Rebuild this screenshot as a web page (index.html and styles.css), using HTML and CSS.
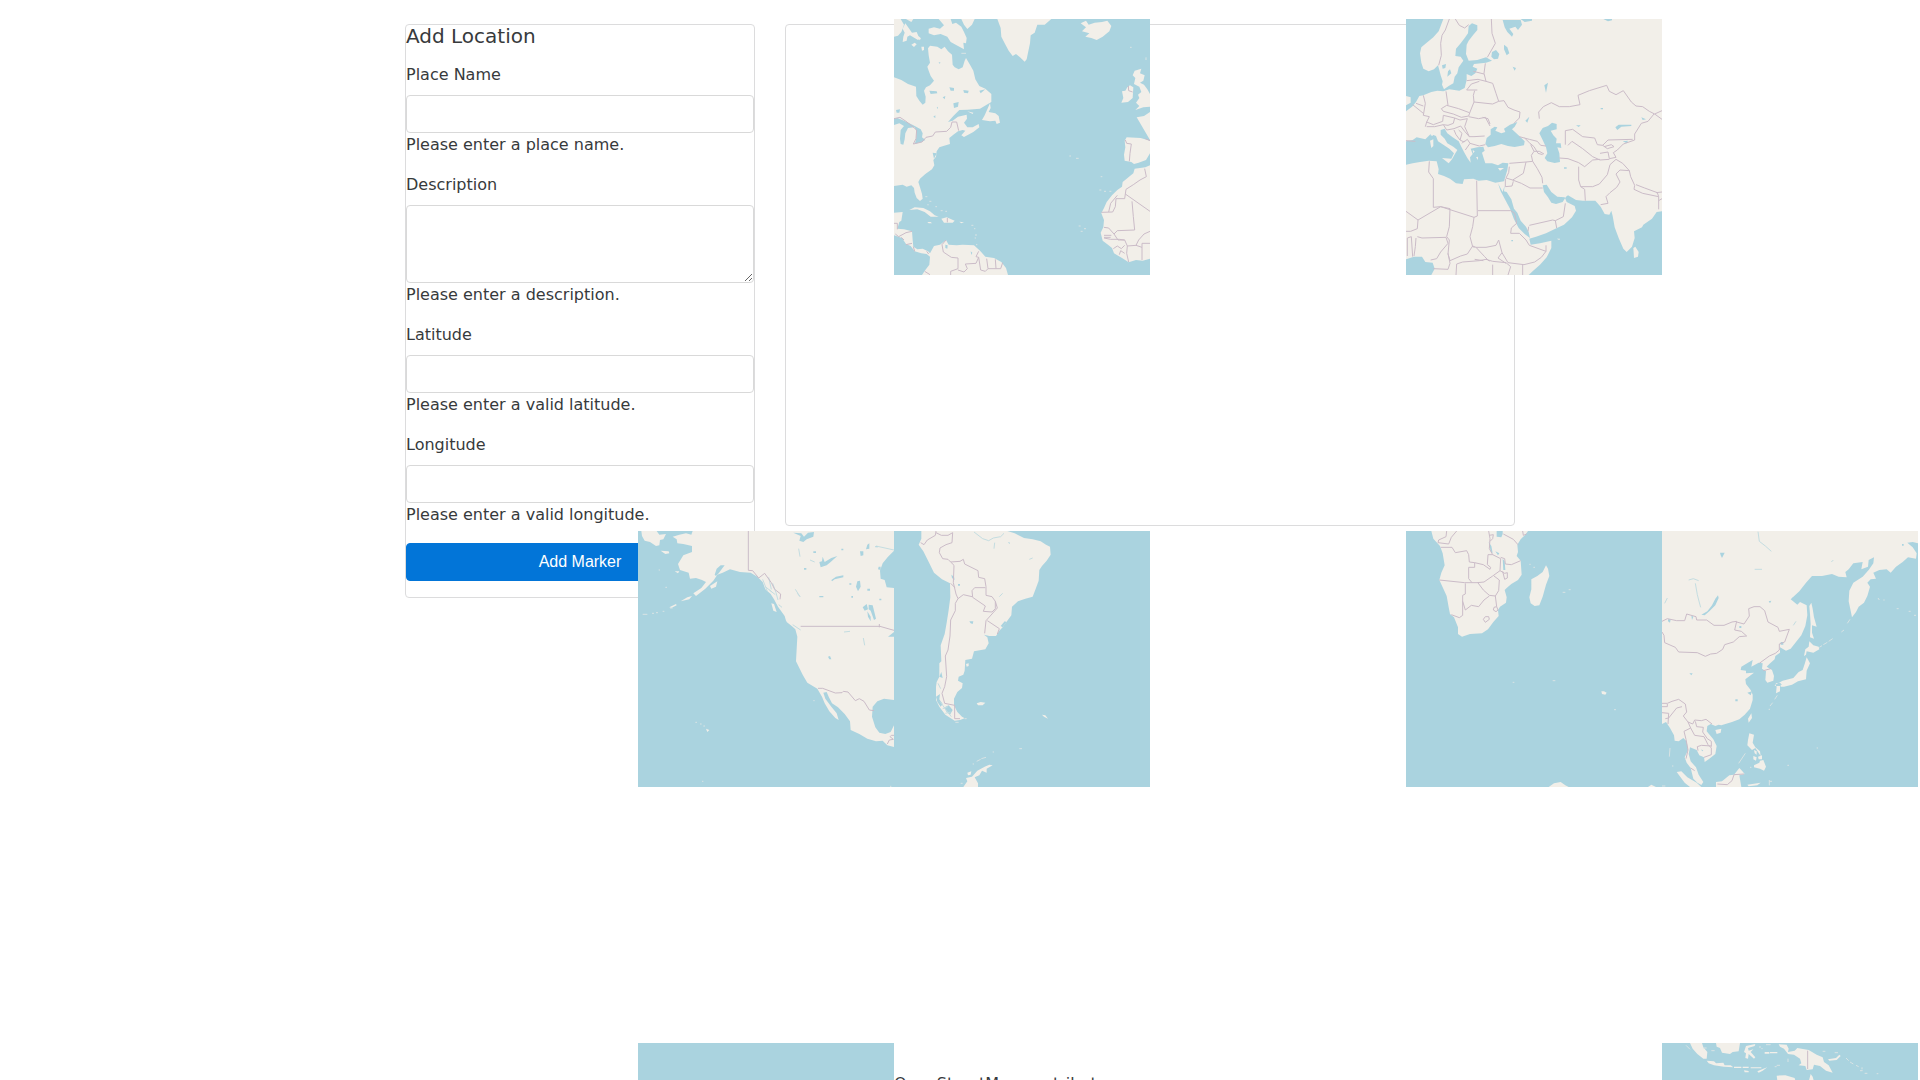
FILE: index.html
```
<!DOCTYPE html>
<html lang="en">
<head>
    <meta charset="UTF-8">
    <meta name="viewport" content="width=device-width, initial-scale=1.0">
    <title>Add Location</title>
    <link rel="stylesheet" href="styles.css">
</head>
<body>
    <div class="page">
    <div class="container">
        <div class="form-column">
            <form class="card" novalidate>
                <h4 class="card-title">Add Location</h4>

                <div class="form-group">
                    <label for="placeName">Place Name</label>
                    <input type="text" class="form-control" id="placeName" required>
                    <div class="feedback">Please enter a place name.</div>
                </div>
                <div class="form-group">
                    <label for="description">Description</label>
                    <textarea class="form-control" id="description" rows="3" required></textarea>
                    <div class="feedback">Please enter a description.</div>
                </div>
                <div class="form-group">
                    <label for="latitude">Latitude</label>
                    <input type="text" class="form-control" id="latitude" required>
                    <div class="feedback">Please enter a valid latitude.</div>
                </div>
                <div class="form-group">
                    <label for="longitude">Longitude</label>
                    <input type="text" class="form-control" id="longitude" required>
                    <div class="feedback">Please enter a valid longitude.</div>
                </div>

                <button type="button" class="btn">Add Marker</button>
            </form>
        </div>

        <div class="map-column">
            <div class="card map" id="map">
                <div class="tiles">
                    <!-- North Atlantic -->
                    <svg class="tile north-atlantic" viewBox="30 27 768 768">
                        <path class="land" d="M30 27H50L60 44L52 66L42 77L30 80ZM64 40L74 54L84 68L98 66L103 78L110 84L102 90L88 82L78 76L70 80L68 92L56 96L58 80L62 68L56 56ZM66 27H88L82 36ZM104 80L111 86L106 91ZM82 104L92 98L98 103L90 111ZM164 27H200L205 42L216 38L232 50L240 66L248 84L246 100L238 98L240 118L222 108L200 96L190 80L170 72L150 76L134 70L134 56L150 52L168 56L180 46ZM232 27H272L264 44L250 57L240 44ZM112 110L120 110L120 120L114 122ZM132 115L138 107L160 110L172 118L182 110L192 124L204 134L206 164L212 172L224 178L236 172L242 152L246 144L258 164L268 182L274 208L286 228L304 236L322 252L322 276L308 284L288 296L250 299L226 300L208 318L192 336L206 332L222 320L248 314L249 326L240 338L250 352L266 352L284 342L286 352L268 366L240 381L232 376L244 362L236 360L222 364L208 374L196 384L198 402L178 408L166 412L158 424L156 440L148 450L151 466L144 478L124 492L108 506L103 516L108 532L114 552L116 566L108 573L98 564L92 548L90 534L82 526L68 530L56 524L30 528V345L46 340L60 348L50 360L48 386L50 402L58 404L62 388L64 370L72 354L92 352L98 366L96 390L92 402L112 396L124 390L114 382L116 370L110 358L88 346L60 332L40 324L30 326V202L52 210L72 222L96 230L97 258L106 272L116 284L124 278L125 260L120 242L126 232L138 226L150 212L140 198L134 182L130 170L138 158L134 136ZM318 280L320 294L314 306L334 310L344 318L348 338L338 342L334 332L318 334L294 330L302 316ZM250 304L268 308L266 312ZM340 27H502L482 44L460 44L452 68L440 76L438 100L432 128L428 148L422 155L408 142L396 132L386 138L374 122L362 100L352 80L350 54ZM590 40L606 32L614 44L632 38L654 36L670 32L682 48L676 64L656 80L638 90L622 84L604 80L616 70L594 64L606 52ZM752 182L772 176L768 190L782 196L778 212L768 218L780 224L790 238L798 252V290L778 292L754 300L766 288L756 278L766 264L762 254L772 246L766 230L750 222L754 204L746 196ZM730 232L738 226L748 232L746 264L732 276L712 278L718 264L714 244L724 242ZM758 322L780 318L798 306V392L770 384L728 382L722 392L724 412L720 434L722 452L742 456L750 462L764 458L786 450L798 430V466L784 472L752 476L748 490L716 516L714 530L700 540L684 556L668 576L660 594L652 610L660 630L658 652L650 668L656 692L672 704L684 714L690 730L714 744L734 757L756 750L776 752L798 746V390ZM30 608L56 606L52 632L46 636L40 656L60 658L84 664L86 690L88 710L100 718L116 716L132 724L138 730L150 708L168 704L186 690L194 704L218 706L236 704L270 706L288 722L304 740L330 744L352 756L366 774L372 795H114L124 780L136 764L138 740L128 732L112 730L92 724L80 708L66 702L54 684L30 676ZM76 600L92 592L118 594L138 604L152 616L164 620L140 620L122 606L100 598ZM172 626L188 622L212 632L206 638L180 638L176 632ZM130 636L140 636L144 640L134 640ZM226 635L240 637L232 640Z"/>
                        <path class="water" d="M136 242L158 244L160 250L140 252ZM196 232L210 234L210 242L200 242ZM238 240L254 242L252 250L240 248ZM286 242L304 238L290 250ZM176 262L184 258L182 268ZM208 280L224 276L222 290L210 294ZM158 294L162 290L162 296ZM148 320L154 316L154 324ZM118 206L128 210L120 218L114 214ZM36 300L48 298L46 308L38 308ZM260 724L265 728L262 735ZM184 704L191 706L190 716L184 714ZM164 156L170 158L166 161ZM146 428L158 430L150 446Z"/>
                        <path class="border" d="M30 326L48 322L66 334L84 348L98 360L96 386L88 402L114 396L126 382L146 378L154 366L188 364L200 352L204 336L218 336L224 362M733 228L734 242L746 246M724 390L728 400L742 402L738 430L736 454M784 386L798 392M782 476L787 500L768 510L748 524L726 538L724 552L798 604M724 552L722 566L696 566L694 590L686 606L652 607M700 556L680 580L674 606M744 574L748 620L752 660L700 662L690 672L674 654L660 652M660 676H682M660 682H680M690 672L702 690H722L730 708L756 706L764 690L780 672L798 664M774 750V700H798M756 706L774 712M730 708L728 730L734 756M722 690L706 688L680 688L660 684M706 734L710 722L722 730M688 716L700 708L712 716L722 706M30 640H40V658M34 672L44 680L66 668L84 664M52 682L60 690M66 704L84 700M88 710L92 724M134 732L128 724M186 690L174 704L178 726L202 742L222 744L222 776L200 784V795M222 780L240 786L250 776L244 762L276 760L284 742L276 740L284 724M284 742L290 780L304 784L312 776L308 746M312 776L336 776L334 748M336 776L350 776L356 758M122 784L138 794M190 624V637"/>
                        <path class="islet" d="M124 560h6M136 574h6M132 582v4M154 590h5M170 602h6M184 604h5M262 646h6M270 656h4M276 672v6M272 684h4M276 704h4M556 438h5M576 445h8M646 540h6M660 544h6M676 544h6M650 500h5M584 648h6M600 656h6M590 664h6M738 112h5M786 142v8M232 130h14"/>
                    </svg>

                    <!-- Europe, Middle East, India -->
                    <svg class="tile eurasia" viewBox="30 27 768 768">
                        <rect class="land" x="30" y="27" width="768" height="768"/>
                        <path class="water" d="M30 27H142L134 48L128 64L112 82L92 98L76 112L72 130L76 158L82 176L98 184L114 178L126 166L130 180L134 196L140 214L138 224L144 238L158 228L172 220L176 200L184 190L188 172L202 152L194 140L178 138L180 116L194 100L206 84L216 70L218 48L228 40L244 46L244 60L232 74L218 92L212 104L210 132L218 152L244 150L270 142L288 152L270 158L234 162L230 170L244 176L238 190L226 198L212 192L212 210L206 234L190 242L160 238L142 244L124 242L106 246L82 256L70 258L60 276L48 290L30 304V286L44 278L44 262L30 258ZM100 238L104 222L100 206L106 192L120 194L118 212L130 220L124 234L118 240ZM288 126L300 120L310 132L306 146L294 148L286 140ZM320 30H374L378 44L366 60L358 50L340 56L352 72L348 80L334 66L326 52ZM374 27H408V32L386 36ZM622 27H648V31L636 34ZM324 104L334 112L340 130L332 136L324 118ZM350 170L360 174L356 182ZM138 166L150 162L148 174L140 176ZM156 184L162 178L166 190L154 200ZM30 394L50 390L62 382L88 388L104 372L120 378L126 394L142 404L160 416L174 430L166 446L138 444L158 460L168 448L178 430L184 420L172 410L154 400L146 386L134 374L134 360L146 356L154 370L170 382L188 394L196 410L204 426L214 444L224 458L222 442L230 432L224 416L244 412L262 410L266 422L258 428L264 448L268 460L288 460L306 466L320 458L337 460L334 480L324 514L298 518L272 510L248 512L232 506L204 508L200 522L180 520L162 506L144 498L126 492L128 478L122 454L98 452L72 456L50 460L30 464ZM268 402L272 384L284 374L284 358L296 350L304 352L298 362L316 370L328 366L324 356L342 344L364 336L356 350L348 358L370 378L386 394L384 406L356 411L336 408L316 402L296 408L276 412ZM430 370L440 354L456 348L468 338L482 342L482 358L464 362L472 376L482 386L480 400L494 400L496 414L484 412L490 430L492 456L476 459L454 454L446 444L454 430L450 412L440 390ZM306 520L314 544L330 574L342 596L354 628L368 654L386 672L402 684L398 666L390 650L374 632L364 608L354 596L346 568L332 546L324 544L326 526L320 546ZM400 686L404 704L432 700L466 692L466 714L452 742L432 764L414 780L398 795H798V604L782 606L768 626L742 644L738 652L714 664L716 684L708 710L692 726L682 716L668 684L656 652L650 618L646 602L640 614L626 612L614 590L598 572L560 572L540 570L516 556L510 560L500 576L480 582L466 578L456 562L444 546L440 526L452 524L466 546L484 560L506 562L512 576L536 588L540 602L528 622L504 644L478 656L450 670L420 680ZM30 748L54 740L78 740L88 756L110 758L116 776L106 795H30ZM658 352L668 344L706 344L706 348L676 350L664 360ZM504 472H512V476H504ZM614 294H621V298H614ZM736 322L750 328L740 330ZM680 394L696 392L692 400ZM540 346L554 346L548 351ZM445 226L456 218L450 248ZM388 332L400 320L394 338ZM346 690h5v4h-5Z"/>
                        <path class="land" d="M104 362L112 370L110 378L104 376ZM102 392L112 388L112 408L106 414L104 404ZM306 474L324 474L312 482ZM712 714L718 710L728 726L726 740L714 744ZM482 686L492 686L490 690ZM238 226L244 220L246 230ZM230 420L236 424L232 430ZM240 442L246 440L246 450Z"/>
                        <path class="border" d="M160 27L148 60L138 76L134 100L136 136L128 166M178 27L190 46L206 54L218 44M286 27L288 70L298 100L274 142M268 160L264 190L270 214L246 208L212 212M232 184L264 192M244 240L212 240L226 222L250 214M270 214L290 220L300 250L308 274L290 282L234 276L232 256L236 242M308 274L324 272L336 292L354 300L372 306L370 324L354 340M234 276L222 306L218 318L196 322L172 312L142 304L136 296L152 286L188 296L220 308M150 244L156 286M82 256L88 280L82 316L100 320L92 336L88 350M50 284L82 310M60 280L82 288M92 336L112 344L140 334L142 316L176 324L172 340L156 346L142 344L116 350L92 350M142 344L152 360L174 356L194 348L206 364L220 380L234 380L266 378M176 324L192 330L214 326L206 350L220 380M218 320L248 326L268 322L282 348M260 322L276 326L282 342M174 360L180 374L192 390L198 370L188 360M192 390L204 396L214 388L222 400L208 420M198 400L206 392M222 400L250 408L268 404M30 392L58 394M370 380L400 388L424 394L434 406L450 408M386 384L400 398L414 410L426 430L440 434M404 404L414 424L406 436L410 454L390 456L340 460M414 424L430 424L444 432M390 456L382 490L350 510L330 504L338 488L340 470M410 454L424 476L438 502L440 520M350 510L376 520L402 534L440 534M328 506L328 530L348 528L352 514M430 326L428 306L442 290L466 278L490 290L520 290L552 284L546 256L580 242L632 226L640 244L660 254L682 242L706 276L720 288L740 290L760 304L776 312L798 302M776 312L798 328M774 312L756 334L736 340L716 372L716 390L682 402L664 420L652 428L660 442L640 446L636 426L612 430M508 404V362L530 358L560 380L596 384L604 404L620 406L636 390L710 388M516 406L528 394L560 416L590 440L612 450L640 448M620 406L634 416L654 410L646 404L624 410M490 444L516 446L548 458L566 470L590 450L612 448M548 470V510L554 530L566 538L568 572M554 530L590 530L610 522L634 494L642 464L660 448L680 460L700 482L704 500L716 526L714 538L740 550L788 560L784 548L746 534L720 524M700 482L672 480L660 492L672 516L662 532L642 548L630 560L636 580L614 584M780 548L798 546M788 560V598M798 566L788 572M100 454L98 486L112 506V592L134 590L234 622M242 512L244 618L234 622L230 650L222 680L230 710L236 712M246 602H344M344 602L356 610L362 640L346 654L344 670L370 670L390 690L400 706L450 724L436 742L416 756L384 764L336 758L318 728L308 690L300 706L270 712L240 712L230 708L214 732L194 738L162 752L156 732L160 690L152 680L160 650L162 596L134 590L66 630L30 604M66 630L64 656L44 664L30 664M64 680L78 684L150 682L156 700L134 726L122 746L104 750M60 684L58 710L54 738M34 738V684L46 680L50 740M156 730L162 760L156 778L112 776M180 795L182 762L200 756L250 752L270 748L290 754L330 758L344 770L336 795M240 712L266 740L280 754M318 728L306 744L330 760M400 646L470 630L478 632L502 620L508 580M398 650L396 664M478 632L482 654M380 764V795M450 706V724M290 764V795M262 752L236 748"/>
                    </svg>

                    <!-- North Pacific -->
                    <svg class="tile north-pacific" viewBox="24 33 768 768">
                        <path class="land" d="M34 33H80L88 44L108 42L100 58L90 60L88 76L78 78L60 66L44 62L36 48ZM128 50L148 44L168 40L184 44L188 33H792V92L774 110L758 130L750 152L752 176L764 180L770 202L792 204V336L774 350L792 350V540L762 536L742 544L728 560L726 590L736 622L748 638L766 642L782 636L792 616V681L772 676L758 662L738 664L712 656L688 642L662 630L660 604L644 582L624 562L606 550L596 530L590 516L580 518L586 536L604 560L620 580L626 600L616 594L598 574L584 550L576 530L562 506L532 488L518 464L498 424L502 350L496 328L468 302L464 288L444 260L432 238L422 222L406 208L398 186L382 170L362 158L330 156L300 148L278 158L262 164L250 182L226 206L198 228L190 220L214 204L228 186L216 180L198 174L180 176L176 158L150 150L144 132L160 106L186 96L186 78L160 72L142 70L140 58ZM92 92L116 94L118 100L106 102ZM134 154L148 154L144 160ZM262 184L258 200L244 206L240 198ZM152 244L172 232L186 228L178 238ZM118 262L138 252L140 256L124 264ZM424 250L432 252L440 276L430 272ZM466 294L482 302L508 326L500 330L470 306ZM228 626L238 630L232 636Z"/>
                        <path class="water" d="M254 164L260 146L272 136L284 136L276 146L266 160L258 168ZM490 38L514 40L522 50L534 38L552 36L550 50L530 58L520 66L508 62L512 48ZM568 126L576 124L578 110L584 126L604 114L622 108L602 126L590 136L572 142ZM690 94H700V106L692 108ZM712 74L718 70L718 86L708 88ZM618 170L640 166L640 172L614 178L606 184L604 180ZM682 184L690 182L692 200L684 214L678 200ZM698 262L710 252L714 268L704 272ZM716 254L728 256L738 296L732 300L722 272L716 268ZM712 274L722 290L722 304L714 290ZM746 140L752 140L752 150L744 148ZM594 410L600 408L604 418L598 418ZM568 228h12v4h-12ZM550 94h8v5h-8ZM522 144h7v5h-7ZM634 86h6v5h-6ZM658 190h6v4h-6ZM712 206h8v6h-8ZM664 228h5v5h-5ZM748 236h6v5h-6ZM736 78h8v4h-8Z"/>
                        <path class="river" d="M398 178L412 214M416 172L424 208M428 190L438 218L444 240M406 200L426 216M418 210L436 224M506 86L510 110M496 208L510 230L502 220M540 120L554 126M446 254L456 262M700 354L704 376M642 336L660 334M738 78L792 90M488 314L512 330"/>
                        <path class="border" d="M355 33V151L368 152L386 174L404 160L424 188L434 208L452 222L450 238M512 319H750L774 326L792 331M748 312v10M564 505H578L616 519L636 518L640 514L654 516L676 542L688 536L702 544L718 570L732 572M772 672L778 660L790 658L780 650L784 646L792 646"/>
                        <path class="islet" d="M38 283h14M66 280h6M78 278h6M98 274h5M120 264h8M196 607h5M210 612h5M220 618h5M86 150h4M106 202h5M550 542h4M216 784h4M780 799h4"/>
                    </svg>

                    <!-- South America -->
                    <svg class="tile south-america" viewBox="24 33 768 768">
                        <path class="land" d="M106 33H364L386 40L414 54L440 58L464 64L480 74L492 80L494 104L482 122L468 138L460 150L458 182L450 204L440 230L418 236L396 244L378 260L376 286L364 302L350 322L340 332L330 348L310 348L294 344L304 352L308 370L298 388L264 394L258 416L238 420L236 452L232 464L218 470L216 482L230 490L228 504L214 516L204 536L204 556L214 576L228 590L236 595L222 600L206 602L178 584L160 560L150 540L150 500L152 486L160 470L160 430L166 424L164 376L176 342L182 308L188 270L193 232L192 190L168 178L144 158L130 130L112 94L98 74L106 56ZM232 801L244 784L240 774L258 770L274 752L296 740L310 734L320 736L302 746L302 758L288 752L280 766L266 772L276 790V801ZM244 758L256 754L254 764L246 766ZM272 550L284 546L298 548L290 556L276 556ZM468 584L478 586L486 596L474 590ZM240 432L248 430L248 438L242 440Z"/>
                        <path class="water" d="M196 164L204 170L206 180L198 174ZM250 304L262 304L260 312L254 310ZM344 318L356 304L362 306L350 322ZM366 66L372 68L370 72ZM216 192h6v5h-6ZM150 530L162 522L160 538L170 552L164 560L154 546ZM160 470L166 456L170 474ZM176 562L188 556L200 570L192 584L180 574Z"/>
                        <path class="river" d="M264 36L290 56L308 62L322 54L344 50L354 40M430 118L440 114M340 230L350 220M324 86L326 68M156 490L164 506M162 544L180 570L196 590M170 566L186 560M178 580L194 576"/>
                        <path class="border" d="M104 68L114 74L124 60L148 46L150 33M150 38L166 46L186 46L200 38L198 68L180 74L162 84L160 98L170 116L186 118L194 126L222 124L232 118L236 132L276 152L278 172L296 176L300 200V226L318 230L328 244L328 266L318 276L292 274L298 258L260 232L258 212L266 203L298 203M194 126L204 136L202 188L210 222L216 236L232 224L258 230M194 190L206 202M216 236L208 250V272L194 300L192 348L186 390L178 408L182 470L176 500L168 520L176 550L206 556V596H222M328 244L334 264L300 302L296 340M304 302L340 326L334 342"/>
                        <path class="islet" d="M260 732h4M272 724l12 -6M286 716l14 -4M320 696h4M400 686h8M236 596h6M224 790h6M208 607h10"/>
                    </svg>

                    <!-- Southern Africa and the Indian Ocean -->
                    <svg class="tile southern-africa" viewBox="30 33 768 768">
                        <path class="land" d="M106 33H396L388 44L374 58L364 74L366 96L362 108L374 122L377 164L366 180L346 192L332 204L326 210L332 232L330 248L312 260L306 270L308 288L292 306L276 328L258 340L222 342L198 350L186 342L186 322L174 292L162 282L158 262L152 228L140 202L130 180L136 158L146 136L140 100L132 78L112 56ZM450 136L456 146L460 168L450 194L440 230L430 256L416 258L404 250L400 232L406 208V178L424 168L440 156ZM458 801L474 790L494 786L508 796L518 801ZM756 801L766 794L780 801ZM616 514L624 514L632 518L628 524L618 522Z"/>
                        <path class="water" d="M302 33H320V42L316 52L302 50ZM320 116L326 124L328 150L322 150ZM278 66L286 78L290 100L284 94ZM298 94L310 100L306 106Z"/>
                        <path class="border" d="M152 33L150 50L128 60L126 68L158 72L166 52L182 33M134 82L168 82L178 98L212 92L218 104L220 126L236 128L236 142H218V176L228 188M236 128L262 134L282 148L284 142L274 134L276 104L290 104L314 116L312 152L290 168L264 186L244 188H206L130 180M312 152L326 160L334 158V174L326 178L320 154M314 112L326 116L328 132L346 134L374 122M290 104L280 86L282 56L278 33M280 46L292 44L290 56L282 64M322 42L352 58L366 74M380 33L382 46L392 42M244 186L262 210L280 226L298 228L308 212L310 180L294 168M208 190V222L200 226V286L190 293L166 284M200 244L208 270L226 256L248 260L264 240L280 228M298 228L302 260L306 270L300 275L292 270L294 262L302 260M262 298L268 290L278 290L280 298L268 307L262 298"/>
                        <path class="islet" d="M400 133h4M412 142h5M500 217h8M518 209h6M350 487h5M470 482h8M654 569h6"/>
                    </svg>

                    <!-- East Asia -->
                    <svg class="tile east-asia" viewBox="30 33 768 768">
                        <path class="land" d="M30 33H798V70L782 66L766 68L782 82L794 100L792 116L768 112L752 126L732 140L716 158L704 148L682 150L664 158L672 176L656 178L646 188L654 200L646 228L636 248L620 260L612 276L600 292L596 272L590 244L592 212L604 188L632 170L650 150L664 130L666 112L650 120L648 140L628 148L632 126L604 130L590 148L580 156L584 172L560 170L540 162L510 168L480 168L462 188L442 214L416 238L436 254L444 246L464 256L466 286L460 318L448 346L432 366L416 386L402 392L384 382L384 398L370 408L368 418L352 432L344 440L360 450L366 468L364 482L346 488L340 480L342 454L330 446L332 430L320 428L298 440L302 420L288 428L268 440L266 450L282 452L282 460L306 458L296 466L280 478L282 492L296 510L302 524V540L294 566L278 584L262 598L240 606L208 616L200 614L190 618L176 612L166 618L164 634L184 658L194 678L190 702L172 716L158 726L156 712L142 706L134 690L114 682L110 702L116 724L132 742L140 764L154 786L148 795L136 788L124 776L116 744L104 728L98 712L108 690L104 664L94 654L80 664L68 662L66 646L54 624L42 606L30 612ZM478 248L482 266L486 292L494 320L480 316L480 338L486 356L474 352L476 312L474 282L472 258ZM472 364L484 376L500 380L502 388L484 398L464 394L462 404L456 408L460 388L470 380ZM464 412L474 430L464 452L462 478L438 484L420 494L396 500L384 488L372 490L368 498L384 498L384 514L372 520L374 500L370 494L392 482L424 474L440 456L452 450L458 432ZM386 494h10v6h-10ZM190 630L208 626L206 638L194 642ZM298 580L300 594L290 608L288 596ZM292 640L306 644L302 668L310 682L324 694L326 708L310 684L300 690L286 676L288 660ZM304 708L314 712L312 722L304 718ZM318 710L330 706L330 718L320 718ZM306 736L322 728L324 722L334 720L342 740L336 752L324 746L306 742ZM306 690L314 694L314 704L308 700ZM74 756L88 754L106 772L134 788L148 801H114L98 788ZM192 801L192 786L210 784L232 766L246 764L262 744L270 752L278 762L262 766L268 801ZM286 794L326 788L316 796L290 799Z"/>
                        <path class="water" d="M198 226L200 234L190 256L172 274L158 286L148 284L166 274L180 256L190 236ZM48 298L56 298L54 308L48 304ZM118 286L124 290L120 300ZM112 460L122 460L118 466ZM204 98L218 98L210 114L206 106ZM350 244L358 242L354 250ZM386 366h8v8h-8ZM262 318h6v6h-6ZM296 526L286 518L300 514ZM250 538h7v6h-7ZM750 72h5v5h-5ZM148 688L154 692L150 694ZM422 232h4v6h-4Z"/>
                        <path class="river" d="M318 35L322 64L340 78L358 94M110 180L124 176L140 182M130 190L136 224L140 240L146 262M38 250L46 234M308 148h22M538 126l6 -6M424 316l8 -12"/>
                        <path class="border" d="M30 304L46 296L74 302L98 302L104 282L132 290L134 300L164 300L186 316L216 316L240 306L254 304L248 330L268 334L284 348L262 350L244 366L218 374L212 388L194 400L176 402L160 409L136 398L80 396L70 382L38 368L36 346L30 336M254 306L276 312L292 288L290 266L306 260L324 260L338 272L348 306L378 322L382 334L412 328L398 366L382 372V390L370 400L352 408L322 430M334 452L356 446M30 550H46L60 544L80 538L100 552L104 576L94 588L108 606L122 612L128 600L148 602L162 598L180 612M46 552L46 560H30M30 578L50 580L48 612M40 596L50 594L74 564L90 560M108 606L116 624L96 634L102 658L108 690L102 716M116 624L128 646L156 650L168 674L178 684L178 704L156 712M130 604L134 620L154 622L152 636L166 656L178 664V680M138 692L136 680L148 676L178 678M116 744L128 752M196 792L226 794L240 782L246 764L276 762"/>
                        <path class="islet" d="M502 382l8 -5M514 374l12 -7M530 364l12 -8M568 336l8 -6M586 310l8 -12M678 234l4 6M694 240h4M734 266h6M770 274h6M786 286h6M376 526l-8 12M362 548l-8 10M350 568h4M280 700l-20 30M54 684l-2 26M60 738h4M494 684h4M406 736h5M352 780v16M352 784h8M30 798h10M294 742h4"/>
                    </svg>

                    <!-- South Pacific -->
                    <svg class="tile south-pacific" viewBox="0 0 768 768"></svg>

                    <!-- Indonesia and New Guinea -->
                    <svg class="tile indonesia" viewBox="66 39 768 768">
                        <path class="land" d="M150 39H186L190 52L202 66L200 86L190 86L172 72L158 56ZM228 39H300L296 64L278 66L270 72L246 68L240 54L230 50ZM200 92L222 94L228 100L250 98L254 106L272 106L280 112L252 110L222 106L206 100ZM318 48L346 42L344 48L324 54L326 62L340 58L332 66L346 82L342 86L326 72L324 86L316 84L318 70L312 66ZM416 43L440 44L446 56L444 66L464 62L472 54L506 60L530 74L548 82L552 96L566 106L578 128L558 122L540 108L522 104L518 118L500 120L496 108L476 106L484 100L480 86L462 74L444 72L432 56L420 50ZM564 88L588 84L598 74L602 78L590 90L568 92ZM352 124L370 116L382 112L368 122L356 128ZM410 137L436 136L464 144L466 152H412ZM512 132L518 140L522 155H506ZM282 110h22v4h-22ZM308 110h18v4h-18ZM332 112h32v3h-32ZM312 121l14 2v4h-12ZM374 66h14v5h-14ZM390 66h22v4h-22Z"/>
                        <path class="border" d="M503 62V117"/>
                        <path class="islet" d="M138 46l12 12M190 54h10M214 62h10M360 48v6M364 56h4M378 44h14M444 86v10M410 106h10M404 110h6M584 68h10M618 84l8 8M630 96l10 6M648 106l8 4M660 122h8M674 130h8M666 112v6M710 131h5M548 64h8"/>
                    </svg>

                    <div class="attribution">OpenStreetMap contributors</div>
                </div>
            </div>
        </div>
    </div>
    </div>
</body>
</html>
```
FILE: styles.css
```
* {
    box-sizing: border-box;
}

body {
    margin: 0;
    background: #fff;
    color: #373a3c;
    font-family: "DejaVu Sans", sans-serif;
    font-size: 16px;
    line-height: 24px;
}

.page {
    min-height: 100vh;
    padding-top: 24px;
    overflow: hidden;
}

.container {
    display: grid;
    grid-template-columns: 1fr 2fr;
    align-items: start;
    max-width: 1140px;
    margin: 0 auto;
}

.form-column,
.map-column {
    min-width: 0;
    padding: 0 15px;
}

.card {
    border: 1px solid #dcdcdd;
    border-radius: 4px;
    background: #fff;
}

.card-title {
    margin: 0 0 16px;
    font-size: 20px;
    font-weight: 400;
    line-height: 22px;
}

.form-group {
    margin-bottom: 16px;
}

label {
    display: block;
    margin-bottom: 8px;
}

.form-control {
    display: block;
    width: 100%;
    padding: 8px 12px;
    border: 1px solid #d9d9d9;
    border-radius: 4px;
    background: #fff;
    color: #464a4c;
    font-family: "Liberation Sans", sans-serif;
    font-size: 16px;
    line-height: 20px;
}

textarea.form-control {
    resize: vertical;
}

.btn {
    display: block;
    width: 100%;
    margin-bottom: 16px;
    padding: 8px 16px;
    border: 1px solid #0275d8;
    border-radius: 4px;
    background: #0275d8;
    color: #fff;
    font-family: "Liberation Sans", sans-serif;
    font-size: 16px;
    line-height: 20px;
    cursor: pointer;
}

.btn:hover {
    background: #025aa5;
}

/* map */
.map {
    position: relative;
    height: 502px;
}

/* the tile layer is larger than the map box and lies over the page */
.tiles {
    position: absolute;
    top: -6px;
    left: -148px;
    display: grid;
    grid-template-columns: repeat(5, 256px);
    grid-template-rows: repeat(5, 256px);
    pointer-events: none;
}

.tile {
    display: block;
    width: 256px;
    height: 256px;
    background: #aad3df;
}

.north-atlantic {
    grid-area: 1 / 2;
}

.eurasia {
    grid-area: 1 / 4;
}

.north-pacific {
    grid-area: 3 / 1;
}

.south-america {
    grid-area: 3 / 2;
}

.southern-africa {
    grid-area: 3 / 4;
}

.east-asia {
    grid-area: 3 / 5;
}

.south-pacific {
    grid-area: 5 / 1;
}

.indonesia {
    grid-area: 5 / 5;
}

.attribution {
    grid-area: 5 / 2;
    padding-top: 29px;
    white-space: nowrap;
}

.land {
    fill: #f2efe9;
}

.water {
    fill: #aad3df;
}

.border {
    fill: none;
    stroke: #cbbcc8;
    stroke-width: 3;
}

.river {
    fill: none;
    stroke: #c4dde1;
    stroke-width: 3;
}

.islet {
    fill: none;
    stroke: #d8e3e4;
    stroke-width: 3;
}
```
